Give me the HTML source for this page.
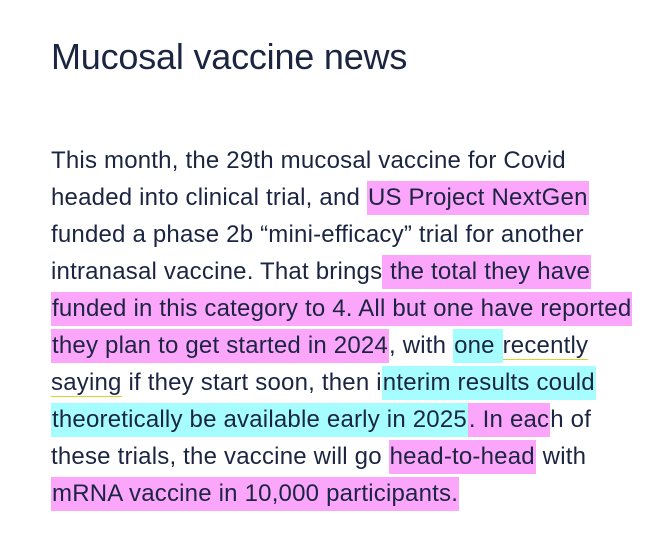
<!DOCTYPE html>
<html><head><meta charset="utf-8"><style>
body{margin:0;background:#fff;width:659px;height:557px;overflow:hidden;font-family:"Liberation Sans",Arial,sans-serif;color:#1b2541}
h1{position:absolute;left:51px;top:36px;margin:0;font-weight:400;font-size:36px;line-height:42px;letter-spacing:-0.2px}
.t{position:absolute;left:51px;top:142px;font-size:24px;line-height:37px;white-space:nowrap;letter-spacing:0.2px}
.p{background:#fba6fb;padding:3px 1px 4px}
.c{background:#a6fdfd;padding:3px 1px 4px}
.u{border-bottom:1.5px solid #d6d62a}
</style></head><body>
<h1>Mucosal vaccine news</h1>
<div class="t">
<div>This month, the 29th mucosal vaccine for Covid</div>
<div>headed into clinical trial, and <span class="p">US Project NextGen</span></div>
<div>funded a phase 2b “mini-efficacy” trial for another</div>
<div>intranasal vaccine. That brings<span class="p"> the total they have</span></div>
<div><span class="p">funded in this category to 4. All but one have reported</span></div>
<div><span class="p">they plan to get started in 2024</span>, with <span class="c">one </span><span class="u">recently</span></div>
<div><span class="u">saying</span> if they start soon, then i<span class="c">nterim results could</span></div>
<div><span class="c">theoretically be available early in 2025</span><span class="p">. In eac</span>h of</div>
<div>these trials, the vaccine will go <span class="p">head-to-head</span> with</div>
<div><span class="p">mRNA vaccine in 10,000 participants. </span></div>
</div>
</body></html>
